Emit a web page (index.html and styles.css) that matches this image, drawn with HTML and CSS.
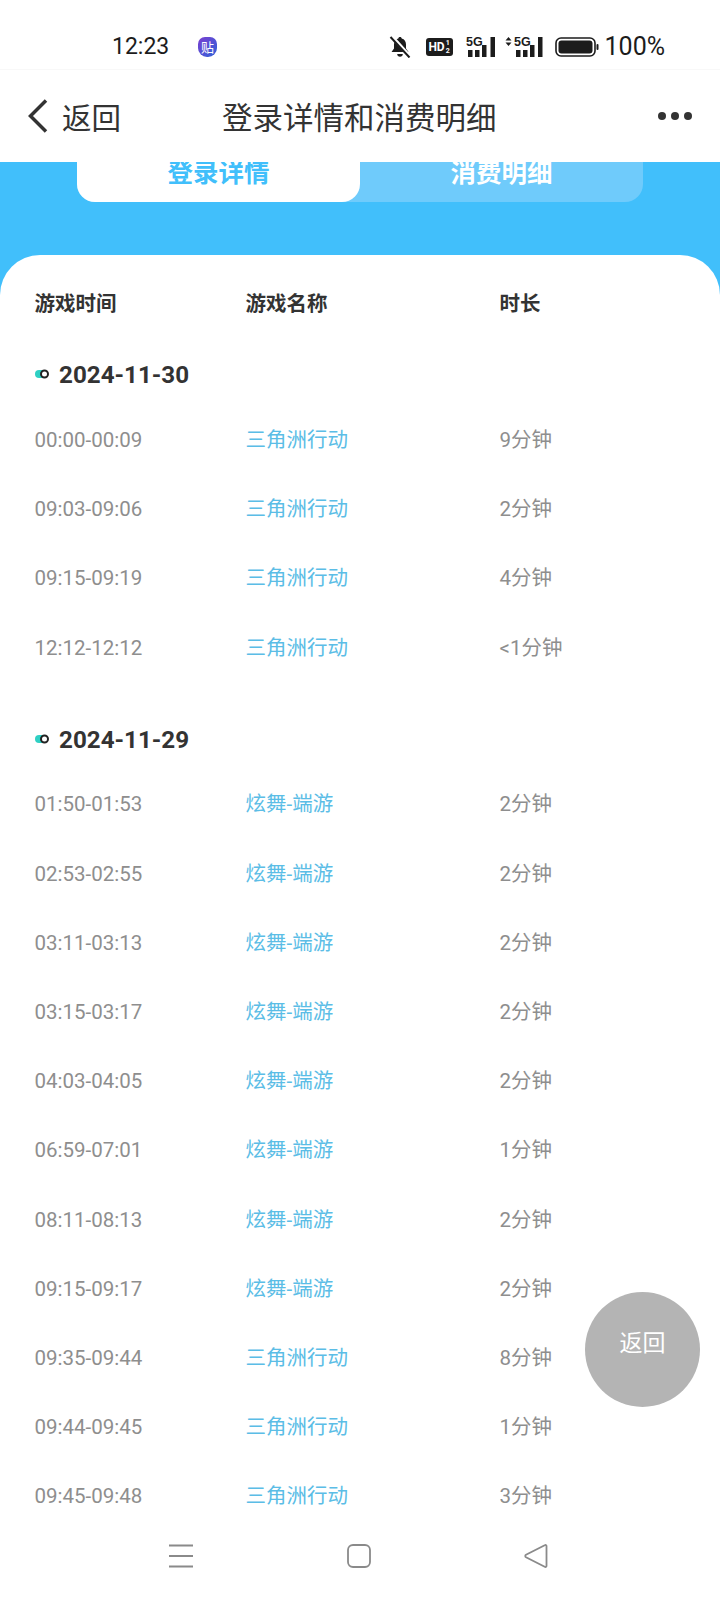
FILE: index.html
```html
<!DOCTYPE html>
<html lang="zh-CN">
<head>
<meta charset="UTF-8">
<meta name="viewport" content="width=device-width, initial-scale=1.0">
<title>登录详情和消费明细</title>
<link rel="stylesheet" href="styles.css">
</head>
<body>
<div class="app">
  <div class="status-bar">
    <span class="clock">12:23</span>
    <span class="sticker">贴</span>
    <div class="status-icons">
      <svg class="ic-bell" width="22" height="22" viewBox="0 0 22 22">
        <path d="M11 1c1 0 1.700.7 1.700 1.600 2.900.8 4.300 3.100 4.300 5.900v4l2.500 3.500H2.500L5 12.500v-4c0-2.800 1.400-5.100 4.300-5.900C9.300 1.700 10 1 11 1z" fill="#1c1c1c"/>
        <path d="M8.200 18h5.600c0 1.700-1.200 2.800-2.800 2.800S8.200 19.700 8.200 18z" fill="#1c1c1c"/>
        <path d="M2.500 0 21 20.500" stroke="#fff" stroke-width="3.500"/>
        <path d="M1.500 1 20.500 21.500" stroke="#1c1c1c" stroke-width="2"/>
      </svg>
      <span class="hd">HD<span class="hd-sub"><i>1</i><i>2</i></span></span>
      <svg class="ic-signal" width="30" height="22" viewBox="0 0 30 22">
        <text x="0" y="9.500" class="net">5G</text>
        <rect x="2" y="14" width="4.500" height="7" fill="#1c1c1c"/>
        <rect x="9" y="14" width="4.500" height="7" fill="#1c1c1c"/>
        <rect x="16" y="9" width="4.500" height="12" fill="#1c1c1c"/>
        <rect x="24.500" y="1" width="4.500" height="20" fill="#1c1c1c"/>
      </svg>
      <svg class="ic-signal2" width="38" height="22" viewBox="0 0 38 22">
        <path d="M3.500 1 6.500 4.500H.5zM3.500 10 .5 6.500h6z" fill="#1c1c1c"/>
        <text x="9" y="9.500" class="net">5G</text>
        <rect x="11" y="14" width="4.500" height="7" fill="#1c1c1c"/>
        <rect x="18" y="14" width="4.500" height="7" fill="#1c1c1c"/>
        <rect x="25" y="9" width="4.500" height="12" fill="#1c1c1c"/>
        <rect x="33" y="1" width="4.500" height="20" fill="#1c1c1c"/>
      </svg>
      <svg class="ic-battery" width="44" height="20" viewBox="0 0 44 20">
        <rect x="1" y="1" width="39" height="18" rx="5" fill="none" stroke="#1c1c1c" stroke-width="1.600"/>
        <rect x="3.500" y="3.500" width="34" height="13" rx="3" fill="#1c1c1c"/>
        <rect x="41.500" y="7" width="2" height="6" rx="1" fill="#1c1c1c"/>
      </svg>
      <span class="percent">100%</span>
    </div>
  </div>

  <div class="nav-bar">
    <div class="nav-back">
      <svg width="20" height="34" viewBox="0 0 20 34">
        <path d="M18 1.500 2.500 17 18 32.500" fill="none" stroke="#333" stroke-width="3.500"/>
      </svg>
      <span>返回</span>
    </div>
    <div class="nav-title">登录详情和消费明细</div>
    <div class="nav-more"><i></i><i></i><i></i></div>
  </div>

  <div class="content">
    <div class="hero">
      <div class="tabs">
        <div class="tab tab-active">登录详情</div>
        <div class="tab">消费明细</div>
      </div>
    </div>

    <div class="card">
      <div class="row row-head">
        <span>游戏时间</span>
        <span>游戏名称</span>
        <span>时长</span>
      </div>

      <div class="date">
        <svg class="date-dot" width="14" height="10" viewBox="0 0 14 10">
          <rect x="0" y="1" width="11" height="8" rx="4" fill="#2fd0c4"/>
          <circle cx="9.500" cy="5" r="3.500" fill="#fff" stroke="#222" stroke-width="2"/>
        </svg>
        2024-11-30
      </div>
      <div class="row"><span>00:00-00:09</span><span class="game">三角洲行动</span><span>9分钟</span></div>
      <div class="row"><span>09:03-09:06</span><span class="game">三角洲行动</span><span>2分钟</span></div>
      <div class="row"><span>09:15-09:19</span><span class="game">三角洲行动</span><span>4分钟</span></div>
      <div class="row"><span>12:12-12:12</span><span class="game">三角洲行动</span><span>&lt;1分钟</span></div>

      <div class="date date-next">
        <svg class="date-dot" width="14" height="10" viewBox="0 0 14 10">
          <rect x="0" y="1" width="11" height="8" rx="4" fill="#2fd0c4"/>
          <circle cx="9.500" cy="5" r="3.500" fill="#fff" stroke="#222" stroke-width="2"/>
        </svg>
        2024-11-29
      </div>
      <div class="row"><span>01:50-01:53</span><span class="game">炫舞-端游</span><span>2分钟</span></div>
      <div class="row"><span>02:53-02:55</span><span class="game">炫舞-端游</span><span>2分钟</span></div>
      <div class="row"><span>03:11-03:13</span><span class="game">炫舞-端游</span><span>2分钟</span></div>
      <div class="row"><span>03:15-03:17</span><span class="game">炫舞-端游</span><span>2分钟</span></div>
      <div class="row"><span>04:03-04:05</span><span class="game">炫舞-端游</span><span>2分钟</span></div>
      <div class="row"><span>06:59-07:01</span><span class="game">炫舞-端游</span><span>1分钟</span></div>
      <div class="row"><span>08:11-08:13</span><span class="game">炫舞-端游</span><span>2分钟</span></div>
      <div class="row"><span>09:15-09:17</span><span class="game">炫舞-端游</span><span>2分钟</span></div>
      <div class="row"><span>09:35-09:44</span><span class="game">三角洲行动</span><span>8分钟</span></div>
      <div class="row"><span>09:44-09:45</span><span class="game">三角洲行动</span><span>1分钟</span></div>
      <div class="row"><span>09:45-09:48</span><span class="game">三角洲行动</span><span>3分钟</span></div>
    </div>

    <div class="float-back"><span>返回</span></div>
  </div>

  <div class="sys-nav">
    <svg width="26" height="24" viewBox="0 0 26 24">
      <path d="M1 1.500h24M1 12h24M1 22.500h24" stroke="#8a8a8a" stroke-width="1.800" fill="none"/>
    </svg>
    <svg width="24" height="24" viewBox="0 0 24 24">
      <rect x="1" y="1" width="22" height="22" rx="5" stroke="#8a8a8a" stroke-width="1.800" fill="none"/>
    </svg>
    <svg width="24" height="24" viewBox="0 0 24 24">
      <path d="M22.500 2v20c0 1-1 1.300-1.800.8L2 13.300c-1-.6-1-2 0-2.600L20.700 1.200c.8-.5 1.800-.2 1.800.8z" stroke="#8a8a8a" stroke-width="1.800" fill="none"/>
    </svg>
  </div>
</div>
</body>
</html>
```

FILE: styles.css
```css
* {
  box-sizing: border-box;
}

body {
  margin: 0;
  background-color: #fff;
  font-family: Roboto, "Noto Sans CJK SC", sans-serif;
}

.app {
  display: flex;
  flex-direction: column;
  width: 720px;
  height: 1600px;
  overflow: hidden;
}

/* status bar */
.status-bar {
  display: flex;
  align-items: center;
  height: 70px;
  padding: 24px 55px 0 112px;
  border-bottom: 1px solid #f8f8f8;
  color: #1c1c1c;
}

.clock {
  width: 86px;
  font-size: 23px;
}

.sticker {
  display: flex;
  justify-content: center;
  align-items: center;
  width: 19px;
  height: 20px;
  border-radius: 7px 7px 9px 9px;
  background: linear-gradient(135deg, #7a3fd0, #2f62d8);
  color: #fff;
  font-size: 13px;
}

.status-icons {
  display: flex;
  align-items: center;
  margin-left: auto;
}

.ic-bell {
  margin-right: 15px;
}

.hd {
  display: flex;
  align-items: center;
  justify-content: center;
  gap: 1px;
  width: 27px;
  height: 18px;
  margin-right: 13px;
  border-radius: 3px;
  background-color: #1c1c1c;
  color: #fff;
  font-size: 12px;
  font-weight: 700;
}

.hd-sub {
  display: flex;
  flex-direction: column;
  font-size: 7px;
  line-height: 8px;
}

.hd-sub i {
  font-style: normal;
}

.net {
  font-family: "Liberation Sans", sans-serif;
  font-size: 12.500px;
  font-weight: 700;
  fill: #1c1c1c;
}

.ic-signal {
  margin-right: 9px;
}

.ic-signal2 {
  margin-right: 12px;
}

.ic-battery {
  margin-right: 6px;
}

.percent {
  font-size: 25px;
}

/* title bar */
.nav-bar {
  display: flex;
  align-items: center;
  position: relative;
  height: 92px;
  padding: 0 28px;
  background-color: #fff;
  color: #333;
  font-size: 29.500px;
}

.nav-back {
  display: flex;
  align-items: center;
  gap: 14px;
}

.nav-title {
  position: absolute;
  left: 222px;
  top: 29px;
  font-size: 30.500px;
  line-height: 40px;
}

.nav-more {
  display: flex;
  gap: 5px;
  margin-left: auto;
}

.nav-more i {
  width: 8px;
  height: 8px;
  border-radius: 50%;
  background-color: #333;
}

/* scrolled content */
.content {
  position: relative;
  flex: 1;
  overflow: hidden;
}

.hero {
  height: 133px;
  background-color: #41bffb;
  overflow: hidden;
}

.tabs {
  display: flex;
  width: 566px;
  height: 80px;
  margin: -40px auto 0;
  border-radius: 18px;
  background-color: #6fcbfb;
}

.tab {
  display: flex;
  justify-content: center;
  align-items: flex-end;
  flex: 1;
  height: 100%;
  padding-bottom: 11px;
  color: #fff;
  font-size: 25.500px;
  font-weight: 700;
  line-height: 36px;
}

.tab-active {
  border-radius: 18px;
  background-color: #fff;
  color: #41bffb;
}

.card {
  margin-top: -40px;
  position: relative;
  padding-top: 22px;
  border-radius: 40px 40px 0 0;
  background-color: #fff;
}

.row {
  display: grid;
  grid-template-columns: 211px 254px 1fr;
  align-items: baseline;
  height: 69.200px;
  padding-left: 34.500px;
  color: #8e8e8e;
  font-size: 20.500px;
  line-height: 73px;
}

.row-head {
  height: 50px;
  margin-bottom: 19px;
  color: #333;
  font-weight: 700;
  line-height: 54px;
}

.game {
  color: #5bbde6;
}

.date {
  display: flex;
  align-items: center;
  height: 58px;
  padding-left: 34.500px;
  color: #333;
  font-size: 24.200px;
  font-weight: 700;
}

.date-next {
  margin-top: 30.200px;
  margin-bottom: -0.500px;
}

.date-dot {
  flex-shrink: 0;
  margin: 0 10.500px 2px 0;
}

/* round back button */
.float-back {
  display: flex;
  justify-content: center;
  position: absolute;
  left: 585px;
  top: 1130px;
  width: 115px;
  height: 115px;
  padding-top: 37px;
  border-radius: 50%;
  background-color: #b4b4b4;
  color: #fff;
  font-size: 23px;
  line-height: 30px;
}

/* android nav */
.sys-nav {
  display: flex;
  justify-content: space-between;
  align-items: flex-start;
  height: 80px;
  padding: 24px 172px 0 168px;
  background-color: #fff;
}
```
